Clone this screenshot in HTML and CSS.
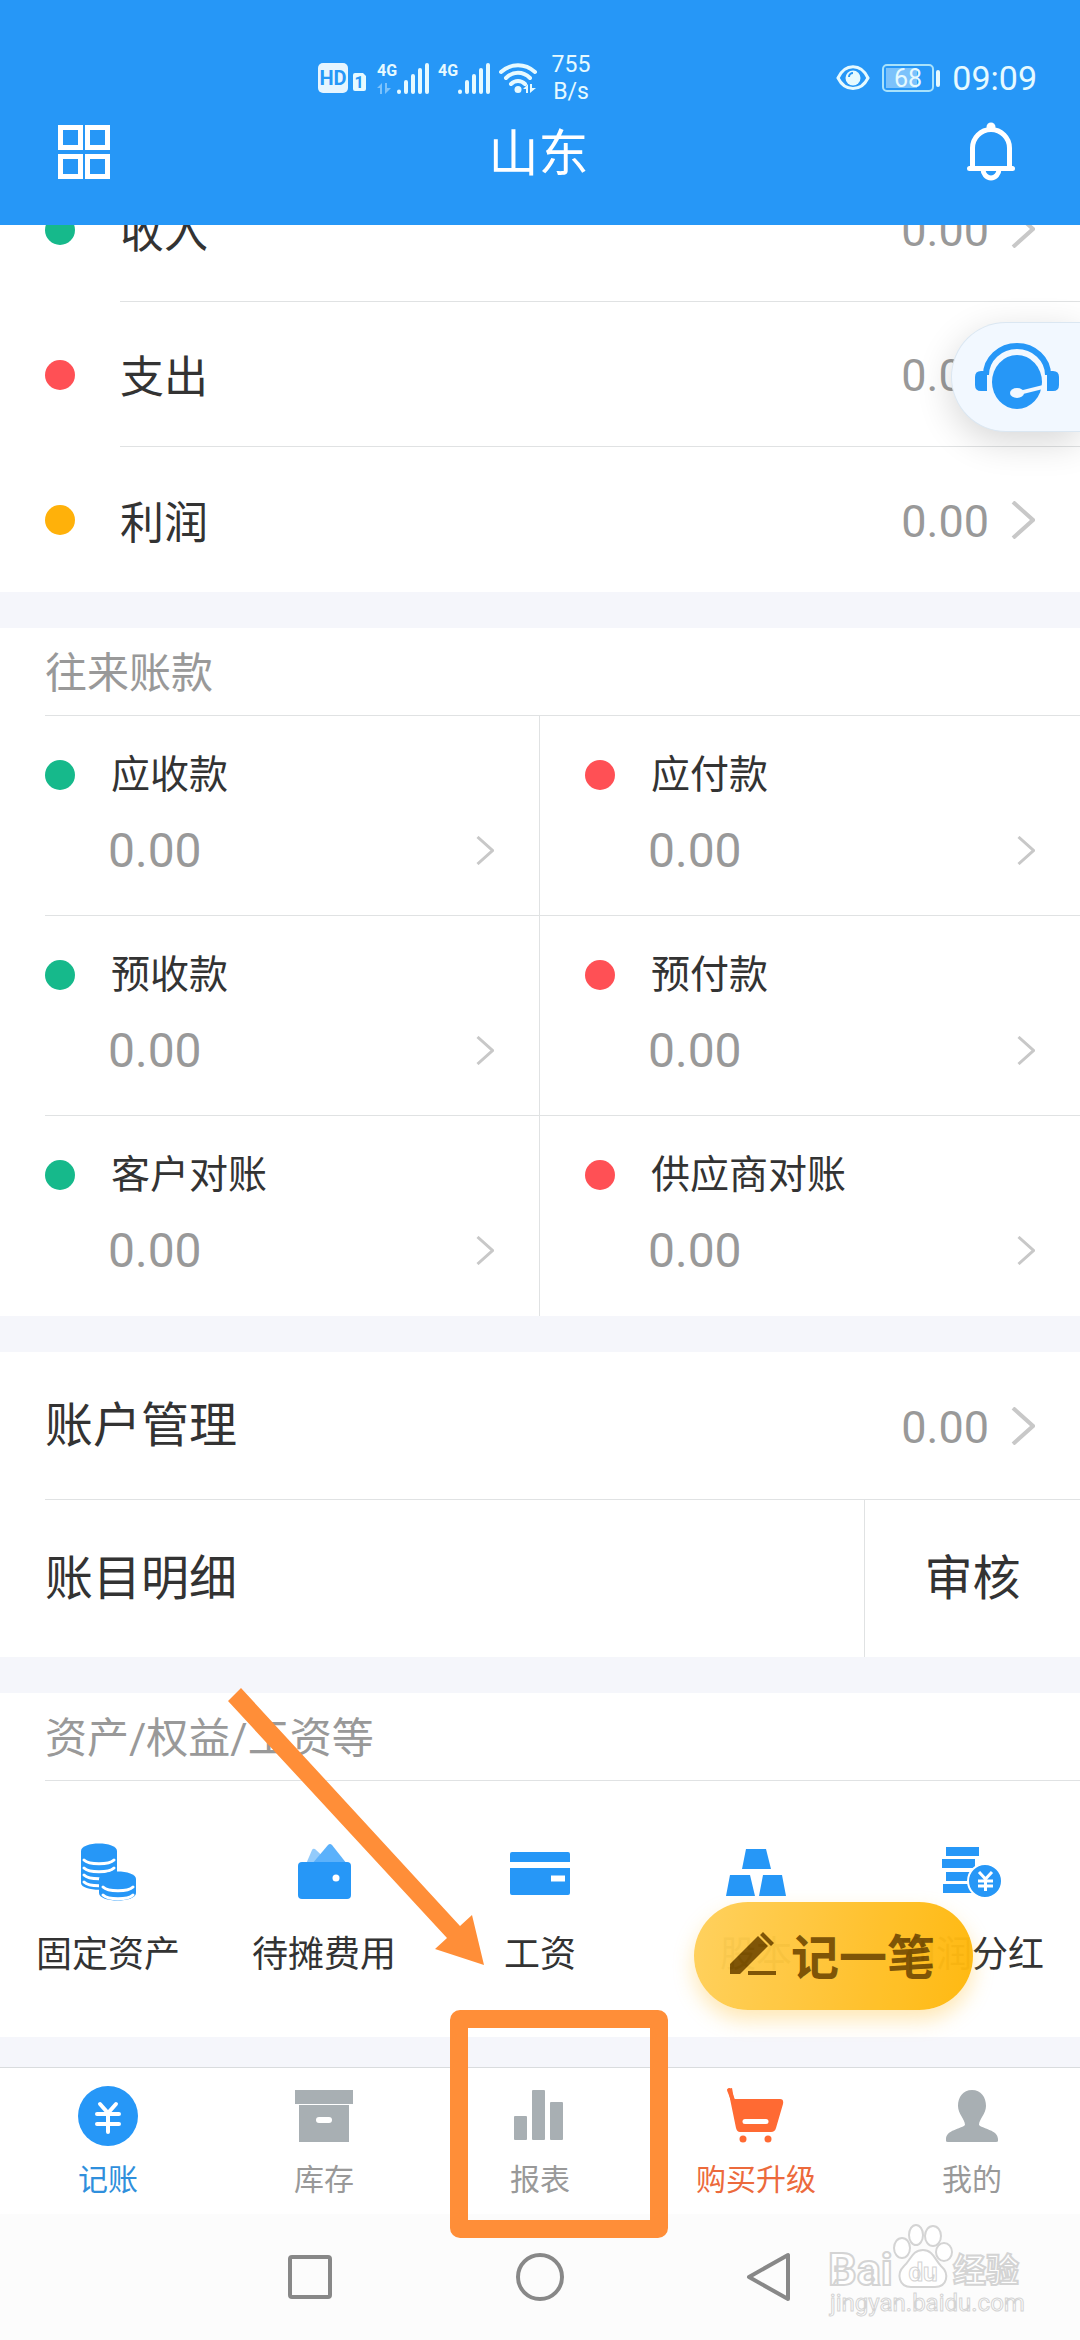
FILE: index.html
```html
<!DOCTYPE html>
<html lang="zh-CN">
<head>
    <meta charset="utf-8">
    <meta name="viewport" content="width=device-width, initial-scale=1">
    <title>记账</title>
    <link rel="stylesheet" href="styles.css">
</head>
<body>
<svg class="defs" aria-hidden="true">
    <symbol id="arrow" viewBox="0 0 24 38">
        <path d="M2 1l20 18L2 37" fill="none" stroke="#c8c8c8" stroke-width="4"/>
    </symbol>
    <symbol id="signal" viewBox="0 0 32 32">
        <path d="M2 29.500v.5M9 20v10M16 14v16M23 8v22M30 3v27" fill="none" stroke="#e6faff" stroke-width="4" stroke-linecap="round"/>
    </symbol>
</svg>

<div class="app">
    <header class="header">
        <div class="status">
            <div class="status-left">
                <svg class="hd" width="50" height="32" viewBox="0 0 50 32">
                    <rect x="0" y="1" width="30" height="30" rx="5" fill="#e6f5ff"/>
                    <text x="15" y="23" text-anchor="middle" font-size="20" font-weight="bold" fill="#2697f7">HD</text>
                    <path d="M37 11h8l3 3v13a2 2 0 0 1-2 2h-9a2 2 0 0 1-2-2V13a2 2 0 0 1 2-2z" fill="#e6faff"/>
                    <text x="41" y="26" text-anchor="middle" font-size="16" font-weight="bold" fill="#2697f7">1</text>
                </svg>
                <span class="net">
                    <span class="net-type"><b>4G</b>
                        <svg width="16" height="11" viewBox="0 0 16 11"><path d="M0 5l5-5v11H3V5zM8 0v11l6-6h-4V0z" fill="#7cc2fb"/></svg>
                    </span>
                    <svg width="32" height="32"><use href="#signal"/></svg>
                </span>
                <span class="net">
                    <span class="net-type"><b>4G</b></span>
                    <svg width="32" height="32"><use href="#signal"/></svg>
                </span>
                <svg width="38" height="32" viewBox="0 0 38 32">
                    <path d="M2 10c10-9 24-9 34 0M7 16c7-7 17-7 24 0M12 22c4-4 10-4 14 0" fill="none" stroke="#e6faff" stroke-width="4" stroke-linecap="round"/>
                    <circle cx="19" cy="27.500" r="3.500" fill="#e6faff"/>
                    <path d="M24 27l5-5v9h-2v-4zM31 22v9l6-5h-4v-4z" fill="#e6faff"/>
                </svg>
                <span class="speed">755<br>B/s</span>
            </div>
            <div class="status-right">
                <svg width="34" height="28" viewBox="0 0 34 28">
                    <path d="M2 14C9-1 25-1 32 14C25 28 9 28 2 14z" fill="none" stroke="#e6faff" stroke-width="3"/>
                    <circle cx="17" cy="14" r="7.500" fill="#e6faff"/>
                    <path d="M13 13a4 4 0 0 1 4-4" fill="none" stroke="#2697f7" stroke-width="2"/>
                </svg>
                <svg class="battery" width="58" height="28" viewBox="0 0 58 28">
                    <rect x="1" y="1" width="50" height="26" rx="4" fill="none" stroke="#a8e2fb" stroke-width="2"/>
                    <rect x="4" y="4" width="31" height="20" fill="#7cc2fb"/>
                    <rect x="54" y="6" width="4" height="17" rx="2" fill="#e6faff"/>
                    <text x="26" y="23" text-anchor="middle" font-size="25" fill="#e6faff">68</text>
                </svg>
                <span class="time">09:09</span>
            </div>
        </div>
        <div class="titlebar">
            <button class="icon-btn" aria-label="菜单">
                <svg width="52" height="54" viewBox="0 0 52 54" fill="none" stroke="#fff" stroke-width="5">
                    <rect x="2.500" y="2.500" width="20" height="20"/>
                    <rect x="29.500" y="2.500" width="20" height="20"/>
                    <rect x="2.500" y="31.500" width="20" height="20"/>
                    <rect x="29.500" y="31.500" width="20" height="20"/>
                </svg>
            </button>
            <h1>山东</h1>
            <button class="icon-btn" aria-label="消息">
                <svg width="48" height="60" viewBox="0 0 48 60" fill="none" stroke="#fff" stroke-width="5">
                    <path d="M5.500 45V26a18.500 18.500 0 0 1 37 0v19"/>
                    <path d="M2.500 46.500h43" stroke-linecap="round"/>
                    <path d="M16 47a8 9 0 0 0 16 0"/>
                    <circle cx="24" cy="5" r="4.500" fill="#fff" stroke="none"/>
                </svg>
            </button>
        </div>
    </header>

    <main class="content">
        <section class="card summary">
            <a class="row" href="#"><i class="dot green"></i><span class="row-main"><span class="name">收入</span><span class="money">0.00</span><svg width="24" height="38"><use href="#arrow"/></svg></span></a>
            <a class="row" href="#"><i class="dot red"></i><span class="row-main"><span class="name">支出</span><span class="money">0.00</span><svg width="24" height="38"><use href="#arrow"/></svg></span></a>
            <a class="row" href="#"><i class="dot yellow"></i><span class="row-main"><span class="name">利润</span><span class="money">0.00</span><svg width="24" height="38"><use href="#arrow"/></svg></span></a>
        </section>

        <section class="card">
            <h2>往来账款</h2>
            <div class="grid">
                <a class="cell" href="#"><i class="dot green"></i><span class="label">应收款</span><span class="value">0.00</span><svg width="18" height="29"><use href="#arrow"/></svg></a>
                <a class="cell" href="#"><i class="dot red"></i><span class="label">应付款</span><span class="value">0.00</span><svg width="18" height="29"><use href="#arrow"/></svg></a>
                <a class="cell" href="#"><i class="dot green"></i><span class="label">预收款</span><span class="value">0.00</span><svg width="18" height="29"><use href="#arrow"/></svg></a>
                <a class="cell" href="#"><i class="dot red"></i><span class="label">预付款</span><span class="value">0.00</span><svg width="18" height="29"><use href="#arrow"/></svg></a>
                <a class="cell" href="#"><i class="dot green"></i><span class="label">客户对账</span><span class="value">0.00</span><svg width="18" height="29"><use href="#arrow"/></svg></a>
                <a class="cell" href="#"><i class="dot red"></i><span class="label">供应商对账</span><span class="value">0.00</span><svg width="18" height="29"><use href="#arrow"/></svg></a>
            </div>
        </section>

        <section class="card account">
            <a class="line" href="#"><span class="name">账户管理</span><span class="money">0.00</span><svg width="24" height="38"><use href="#arrow"/></svg></a>
            <div class="split">
                <a class="detail" href="#">账目明细</a>
                <a class="audit" href="#">审核</a>
            </div>
        </section>

        <section class="card">
            <h2>资产/权益/工资等</h2>
            <div class="tools">
                <a class="tool" href="#">
                    <svg width="60" height="60" viewBox="0 0 60 60">
                        <path d="M3 9c0-10 36-10 36 0v32c0 9-36 9-36 0z" fill="#2697f7"/>
                        <path d="M6 18c5 5 25 5 30 0M6 26c5 5 25 5 30 0M6 33c5 5 25 5 30 0M6 40c5 5 25 5 30 0" fill="none" stroke="#fff" stroke-width="3" stroke-linecap="round"/>
                        <path d="M21 37c0-10 37-10 37 0v14c0 10-37 10-37 0z" fill="#2697f7"/>
                        <path d="M25 45c5 5 25 5 30 0M25 53c5 5 25 5 30 0" fill="none" stroke="#fff" stroke-width="3" stroke-linecap="round"/>
                    </svg>
                    <span>固定资产</span>
                </a>
                <a class="tool" href="#">
                    <svg width="60" height="60" viewBox="0 0 60 60">
                        <path d="M12 22l6-14q1-2 3-1l16 15z" fill="#93cbfb"/>
                        <path d="M18 22L34 3q2-2 4 0l15 19z" fill="#5bb1fb"/>
                        <rect x="4" y="20" width="53" height="37" rx="4" fill="#2697f7"/>
                        <circle cx="42" cy="36" r="3.500" fill="#fff"/>
                    </svg>
                    <span>待摊费用</span>
                </a>
                <a class="tool" href="#">
                    <svg width="60" height="60" viewBox="0 0 60 60">
                        <path d="M2 10h56a2 2 0 0 1 2 2v8H0v-8a2 2 0 0 1 2-2zM0 26h60v25a2 2 0 0 1-2 2H2a2 2 0 0 1-2-2z" fill="#2697f7"/>
                        <path d="M41 36.500h14" stroke="#fff" stroke-width="6"/>
                    </svg>
                    <span>工资</span>
                </a>
                <a class="tool" href="#">
                    <svg width="60" height="60" viewBox="0 0 60 60" fill="#2697f7">
                        <path d="M20 7h20l5 20H16zM4 33h20l5 21H0zM37 33h19l4 21H33z"/>
                    </svg>
                    <span>股本</span>
                </a>
                <a class="tool" href="#">
                    <svg width="60" height="60" viewBox="0 0 60 60" fill="#2697f7">
                        <path d="M4 5h33v9H4zM0 17h33v9H0zM4 30h30v9H4zM1 42h33v9H1z"/>
                        <circle cx="43" cy="39" r="17" stroke="#fff" stroke-width="2"/>
                        <path d="M37 30l6.500 7 6.500-7M43.500 37v12M36 39h15M36 44h15" fill="none" stroke="#fff" stroke-width="3"/>
                    </svg>
                    <span>利润分红</span>
                </a>
            </div>
        </section>
    </main>

    <nav class="tabs">
        <a class="tab active" href="#">
            <svg width="60" height="60" viewBox="0 0 60 60">
                <circle cx="30" cy="30" r="30" fill="#2697f7"/>
                <path d="M22 18l8 9 8-9M30 27v19M19 28h22M19 38h22" fill="none" stroke="#fff" stroke-width="4" stroke-linecap="round"/>
            </svg>
            <span>记账</span>
        </a>
        <a class="tab" href="#">
            <svg width="60" height="60" viewBox="0 0 60 60" fill="#a8afb3">
                <path d="M1 4h58v14H1zM5 19h50v37H5z"/>
                <rect x="22" y="31" width="16" height="6" rx="3" fill="#fff"/>
            </svg>
            <span>库存</span>
        </a>
        <a class="tab" href="#">
            <svg width="60" height="60" viewBox="0 0 60 60" fill="#a8afb3">
                <rect x="4" y="30" width="13" height="24" rx="1"/>
                <rect x="22" y="4" width="13" height="50" rx="1"/>
                <rect x="40" y="16" width="13" height="38" rx="1"/>
            </svg>
            <span>报表</span>
        </a>
        <a class="tab hot" href="#">
            <svg width="60" height="60" viewBox="0 0 60 60" fill="#ff6a33">
                <path d="M3 4l4 10" stroke="#ff6a33" stroke-width="4" stroke-linecap="round"/>
                <path d="M2 3l4-1 2 11h46q4 0 3 5l-7 24q-1 4-5 4H14q-3 0-4-4z"/>
                <path d="M19 35.500h21" stroke="#fff" stroke-width="5" stroke-linecap="round"/>
                <circle cx="17" cy="53" r="3.500"/>
                <circle cx="42" cy="53" r="3.500"/>
            </svg>
            <span>购买升级</span>
        </a>
        <a class="tab" href="#">
            <svg width="60" height="60" viewBox="0 0 60 60" fill="#a8afb3">
                <path d="M30 4c9 0 14 7 14 16 0 8-7 13-7 19 4 4 19 5 19 14v2q0 1-2 1H6q-2 0-2-1v-2c0-9 15-10 19-14 0-6-7-11-7-19 0-9 5-16 14-16z"/>
            </svg>
            <span>我的</span>
        </a>
    </nav>

    <div class="sysnav">
        <button aria-label="最近任务"><svg width="50" height="50" viewBox="0 0 50 50"><rect x="5" y="5" width="40" height="40" rx="2"/></svg></button>
        <button aria-label="主页"><svg width="50" height="50" viewBox="0 0 50 50"><circle cx="25" cy="25" r="22"/></svg></button>
        <button aria-label="返回"><svg width="50" height="50" viewBox="0 0 50 50"><path d="M43 3v44L4 25z" stroke-linejoin="round"/></svg></button>
    </div>

    <button class="service" aria-label="客服">
        <svg width="84" height="68" viewBox="0 0 84 68" fill="#2697f7">
            <path d="M11 32a31 29 0 0 1 62 0" fill="none" stroke="#2697f7" stroke-width="6"/>
            <path d="M12 28v20H6q-6 0-6-6v-8q0-6 6-6zM72 28v20h6q6 0 6-6v-8q0-6-6-6z"/>
            <ellipse cx="42" cy="39" rx="25" ry="27"/>
            <path d="M44 48l24-6v4l-24 6z" fill="#f2f8ff"/>
            <ellipse cx="42" cy="50" rx="7" ry="5" fill="#f2f8ff"/>
        </svg>
    </button>

    <button class="add">
        <svg width="46" height="44" viewBox="0 0 46 44" fill="#7b5000">
            <path d="M0 42V32L28 4l10 10L10 42zM30 3l3-3 11 11-3 3z"/>
            <path d="M18 39h28v4H18z"/>
        </svg>
        <span>记一笔</span>
    </button>

    <svg class="pointer" width="256" height="278" viewBox="0 0 256 278">
        <path d="M13 0L232 238l12-11 12 50-49-16 12-11L0 13z" fill="#ff8e38"/>
    </svg>
    <div class="marker"></div>

    <svg class="watermark" width="200" height="100" viewBox="0 0 200 100" fill="#fff" stroke="#d4d4d4">
        <g font-weight="bold" stroke-width="2">
            <text x="0" y="64" font-size="45">Bai</text>
            <ellipse cx="74" cy="27" rx="8" ry="10"/>
            <ellipse cx="88" cy="14" rx="7" ry="10"/>
            <ellipse cx="105" cy="15" rx="8" ry="10"/>
            <ellipse cx="116" cy="31" rx="8" ry="9"/>
            <path d="M95 29c10 0 12 10 18 16 9 8 6 21-6 21-8 0-16 0-24 0-12 0-15-13-7-21 7-6 8-16 19-16z"/>
            <text x="95" y="60" font-size="26" text-anchor="middle" stroke-width="1">du</text>
            <text x="125" y="61" font-size="33">经验</text>
        </g>
        <text x="2" y="90" font-size="24">jingyan.baidu.com</text>
    </svg>
</div>
</body>
</html>
```
FILE: styles.css
```css
* {
    box-sizing: border-box;
}
body {
    margin: 0;
    font-family: Roboto, "Noto Sans CJK SC", sans-serif;
    color: #333;
    background-color: #f5f6fb;
}
a {
    color: inherit;
    text-decoration: none;
}
button {
    border: 0;
    padding: 0;
    background: none;
    font-family: inherit;
    cursor: pointer;
}
svg {
    display: block;
    flex: none;
}
.defs {
    position: absolute;
    width: 0;
    height: 0;
}
.app {
    position: relative;
    display: flex;
    flex-direction: column;
    height: 100vh;
    overflow: hidden;
}

/* header */
.header {
    flex: none;
    background-color: #2697f7;
    color: #fff;
}
.status {
    display: flex;
    justify-content: space-between;
    align-items: center;
    height: 108px;
    padding: 48px 43px 0 318px;
    color: #e6faff;
}
.status-left {
    display: flex;
    align-items: center;
    gap: 9px;
}
.net {
    display: flex;
}
.net-type {
    display: flex;
    flex-direction: column;
    justify-content: space-between;
    width: 20px;
    font-size: 16px;
    line-height: 18px;
}
.speed {
    width: 50px;
    font-size: 23px;
    line-height: 27px;
    text-align: center;
}
.status-right {
    display: flex;
    align-items: center;
    gap: 12px;
}
.time {
    font-size: 34px;
}
.titlebar {
    display: flex;
    justify-content: space-between;
    align-items: center;
    height: 117px;
    padding: 0 65px 30px 58px;
}
h1 {
    margin: 0;
    padding-top: 4px;
    font-size: 50px;
    font-weight: normal;
    line-height: 60px;
}

/* content */
.content {
    flex: 1;
    min-height: 0;
    overflow: hidden;
    display: flex;
    flex-direction: column;
    gap: 36px;
}
.card {
    flex: none;
    background-color: #fff;
}
/* list is scrolled a little way under the header */
.summary {
    margin-top: -68px;
}
.row {
    display: flex;
    align-items: center;
    padding-left: 45px;
}
.row-main {
    flex: 1;
    display: flex;
    align-items: center;
    height: 145px;
    margin-left: 45px;
    padding-right: 45px;
    border-bottom: 1px solid #e0e2e3;
    font-size: 44px;
}
.row:last-child .row-main {
    border-bottom: 0;
}
.name {
    flex: 1;
}
.money {
    margin-right: 22px;
    padding-top: 3px;
    font-size: 45px;
    color: #999;
}
.dot {
    flex: none;
    width: 30px;
    height: 30px;
    border-radius: 50%;
}
.green {
    background-color: #16b98b;
}
.red {
    background-color: #ff5055;
}
.yellow {
    background-color: #ffb10a;
}
h2 {
    margin: 0 0 0 45px;
    padding-top: 4px;
    border-bottom: 1px solid #e0e2e3;
    font-size: 42px;
    font-weight: normal;
    line-height: 83px;
    color: #999;
}
.grid {
    display: grid;
    grid-template-columns: 1fr 1fr;
}
.cell {
    display: grid;
    grid-template-columns: 63px 1fr 18px;
    grid-template-rows: 60px 90px;
    align-items: center;
    height: 200px;
    padding: 29px 45px 0;
    border-bottom: 1px solid #e0e2e3;
}
.cell:nth-child(odd) {
    margin-left: 45px;
    padding-left: 0;
    border-right: 1px solid #e0e2e3;
}
.cell:nth-last-child(-n+2) {
    border-bottom: 0;
}
.label {
    grid-column: 2 / 4;
    padding-left: 3px;
    font-size: 39px;
    line-height: 54px;
}
.value {
    grid-column: 2;
    font-size: 48px;
    color: #999;
}
.account {
    font-size: 48px;
}
.line {
    display: flex;
    align-items: center;
    height: 148px;
    margin-left: 45px;
    padding-right: 45px;
    border-bottom: 1px solid #e0e2e3;
}
.line .name {
    line-height: 60px;
}
.split {
    display: flex;
    padding-top: 0;
    line-height: 157px;
}
.detail {
    flex: 1;
    padding-left: 45px;
}
.audit {
    width: 20%;
    border-left: 1px solid #e0e2e3;
    text-align: center;
}
.tools {
    display: flex;
    height: 256px;
    padding-top: 61px;
}
.tool {
    flex: 1;
    display: flex;
    flex-direction: column;
    align-items: center;
    gap: 26px;
    font-size: 36px;
    line-height: 54px;
}

/* bottom bars */
.tabs {
    flex: none;
    display: flex;
    height: 147px;
    padding-top: 18px;
    border-top: 1px solid #d9dcde;
    background-color: #fff;
}
.tab {
    flex: 1;
    display: flex;
    flex-direction: column;
    align-items: center;
    gap: 12px;
    font-size: 30px;
    line-height: 44px;
    color: #999;
}
.active {
    color: #2f8fdc;
}
.hot {
    color: #ec6a3c;
}
.sysnav {
    flex: none;
    display: flex;
    justify-content: center;
    align-items: center;
    gap: 180px;
    height: 126px;
    background-color: #fcfcfc;
}
.sysnav svg {
    fill: none;
    stroke: #888;
    stroke-width: 4;
}

/* floating things */
.service {
    position: absolute;
    top: 322px;
    right: 0;
    width: 129px;
    height: 110px;
    padding-left: 23px;
    border: 1px solid #dbe7f2;
    border-right: 0;
    border-radius: 55px 0 0 55px;
    background-color: #f2f8ff;
    box-shadow: 0 10px 36px rgba(0, 0, 0, 0.16);
}
.add {
    position: absolute;
    right: 107px;
    bottom: 330px;
    display: flex;
    align-items: center;
    gap: 15px;
    width: 279px;
    height: 108px;
    padding: 0 0 4px 36px;
    border-radius: 54px;
    background: linear-gradient(100deg, #ffd05a, #ffb70a);
    box-shadow: 0 10px 20px rgba(255, 190, 40, 0.35);
    font-size: 48px;
    font-weight: bold;
    color: #7b5000;
    opacity: 0.97;
}
.pointer {
    position: absolute;
    left: 228px;
    bottom: 374px;
}
.marker {
    position: absolute;
    left: 450px;
    bottom: 102px;
    width: 218px;
    height: 228px;
    border: 18px solid #ff8e38;
    border-radius: 10px;
}
.watermark {
    position: absolute;
    right: 52px;
    bottom: 19px;
}
```
